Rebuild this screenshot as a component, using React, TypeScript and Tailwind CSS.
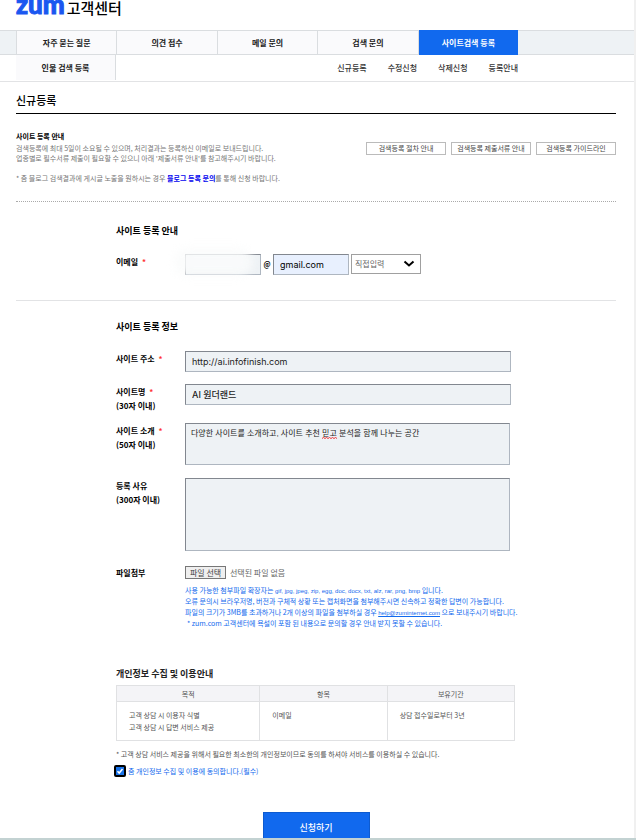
import type { ReactNode } from "react";

const tabs = ["자주 묻는 질문", "의견 접수", "메일 문의", "검색 문의", "사이트검색 등록"];
const subLinks = ["신규등록", "수정신청", "삭제신청", "등록안내"];
const guideButtons = ["검색등록 절차 안내", "검색등록 제출서류 안내", "검색등록 가이드라인"];

const fieldClass =
  "block w-full bg-[#eef2f5] border border-t-[#82878f] border-l-[#82878f] border-r-[#aeb6c0] border-b-[#aeb6c0] outline-none text-[#222]";

interface FieldProps {
  id: string;
  label: string;
  limit?: string;
  required?: boolean;
  className?: string;
  children: ReactNode;
}

const Field = ({ id, label, limit, required, className, children }: FieldProps) => (
  <div className={`flex ${className ?? ""}`}>
    <label htmlFor={id} className="w-[69px] shrink-0 pt-px text-[8px] leading-[14px] font-bold text-black">
      {label}
      {required && <span className="ml-0.5 text-[#f33]"> *</span>}
      {limit && <span className="block">({limit})</span>}
    </label>
    <div className="min-w-0 flex-1">{children}</div>
  </div>
);

const Header = () => (
  <header>
    <div className="flex h-[30px] items-start pl-4">
      <a href="#" className="flex items-baseline gap-0.5">
        <span className="font-['Lato'] text-[26px] leading-[8px] font-black text-[#1a57f0] [-webkit-text-stroke:1px_#1a57f0]">
          zum
        </span>
        <span className="text-[15px] leading-[8px] font-medium text-black">고객센터</span>
      </a>
    </div>
    <nav className="border-y border-[#dadde0] bg-[#eef2f5] pl-4">
      <ul className="flex max-w-[502px]">
        {tabs.map((tab, i) => (
          <li key={tab} className="flex-1 border-l border-[#dadde0]">
            <a
              href="#"
              className={`flex items-center justify-center text-[8px] font-bold ${
                i === tabs.length - 1 ? "-my-px h-[25px] bg-[#1169ee] text-white" : "h-[23px] bg-[#fafafc] text-[#222]"
              }`}
            >
              {tab}
            </a>
          </li>
        ))}
      </ul>
    </nav>
    <nav className="border-b border-[#e2e3e5] pl-4">
      <div className="flex h-[26px] max-w-[502px] items-center justify-between">
        <a
          href="#"
          className="flex h-[25px] w-[100px] items-center justify-center self-start border-r border-[#dadde0] bg-[#fafafc] text-[8px] font-bold text-[#222]"
        >
          인물 검색 등록
        </a>
        <ul className="flex gap-[21px] text-[8px] font-medium text-[#333]">
          {subLinks.map((link) => (
            <li key={link}>
              <a href="#">{link}</a>
            </li>
          ))}
        </ul>
      </div>
    </nav>
  </header>
);

const Intro = () => (
  <section className="flex items-start justify-between border-b border-dotted border-[#aaa] pt-[17px] pb-[18px]">
    <div className="text-[7px] leading-[10px] text-[#777]">
      <h2 className="mb-0.5 font-bold text-black">사이트 등록 안내</h2>
      <p>검색등록에 최대 5일이 소요될 수 있으며, 처리결과는 등록하신 이메일로 보내드립니다.</p>
      <p>업종별로 필수서류 제출이 필요할 수 있으니 아래 '제출서류 안내'를 참고해주시기 바랍니다.</p>
      <p className="mt-2.5">
        * 줌 블로그 검색결과에 게시글 노출을 원하시는 경우{" "}
        <a href="#" className="font-bold text-[#0000ee]">
          블로그 등록 문의
        </a>
        를 통해 신청 바랍니다.
      </p>
    </div>
    <div className="mt-[11px] flex shrink-0 gap-[5px]">
      {guideButtons.map((text) => (
        <button key={text} type="button" className="h-[13px] w-20 border border-[#bbb] bg-white text-[7px] leading-[11px] whitespace-nowrap text-[#444]">
          {text}
        </button>
      ))}
    </div>
  </section>
);

const EmailSection = () => (
  <section className="border-b border-[#e2e3e5] pb-[25px] pl-[100px]">
    <h3 className="pt-[22px] text-[9px] leading-[14px] font-bold text-black">사이트 등록 안내</h3>
    <Field id="email" label="이메일" required className="mt-4">
      <div className="flex items-center text-[9px]">
        <div className="relative w-[76px]">
          <input id="email" type="text" className={`${fieldClass} h-[21px] px-1.5`} />
          <div className="absolute -top-1.5 -left-3 h-7 w-20 rounded-full bg-[#fafbfb]/85 blur-[4px]" />
        </div>
        <span className="w-3 text-center text-[7px] font-bold">@</span>
        <input
          type="text"
          aria-label="이메일 도메인"
          defaultValue="gmail.com"
          className="h-[21px] w-[76px] border border-[#aeb6c0] border-t-[#82878f] border-l-[#82878f] bg-[#e8f0fe] px-1.5 font-['Inter'] text-black outline-none"
        />
        <div className="relative ml-0.5 w-[70px] self-start">
          <select
            aria-label="도메인 선택"
            className="block h-5 w-full appearance-none border border-[#a0a0a0] bg-white pl-[3px] text-[8px] text-[#666] outline-none"
          >
            <option>직접입력</option>
          </select>
          <svg viewBox="0 0 12 8" className="pointer-events-none absolute top-1.5 right-1.5 h-2 w-3" fill="none" stroke="#000" strokeWidth="2">
            <path d="M1.5 1.5 6 5.5l4.5-4" />
          </svg>
        </div>
      </div>
    </Field>
  </section>
);

const SiteSection = () => (
  <section className="max-w-[495px] pl-[100px]">
    <h3 className="pt-[19px] text-[9px] leading-[14px] font-bold text-black">사이트 등록 정보</h3>
    <Field id="url" label="사이트 주소" required className="mt-[17px]">
      <input
        id="url"
        type="text"
        defaultValue="http://ai.infofinish.com"
        className={`${fieldClass} h-[21px] px-1.5 font-['Inter'] text-[9px]`}
      />
    </Field>
    <Field id="name" label="사이트명" limit="30자 이내" required className="mt-3">
      <input
        id="name"
        type="text"
        defaultValue="AI 원더랜드"
        className={`${fieldClass} h-[21px] px-1.5 font-['Inter','Noto_Sans_CJK_KR'] text-[9px] font-medium`}
      />
    </Field>
    <Field id="intro" label="사이트 소개" limit="50자 이내" required className="mt-2.5 pr-px">
      <div className="relative">
        <textarea
          id="intro"
          spellCheck={false}
          defaultValue="다양한 사이트를 소개하고, 사이트 추천 믿고 분석을 함께 나누는 공간"
          className={`${fieldClass} h-[42px] resize-none px-[5px] py-1 font-['Liberation_Sans','Noto_Sans_CJK_KR'] text-[8px] leading-[12px]`}
        />
        {/* spell checker mark */}
        <svg viewBox="0 0 15 2" className="pointer-events-none absolute top-3.5 left-[137px] h-0.5 w-[15px]" fill="none" stroke="#e33">
          <path d="M0 1.5 1.5.5 3 1.5 4.5.5 6 1.5 7.5.5 9 1.5 10.5.5 12 1.5 13.5.5 15 1.5" />
        </svg>
      </div>
    </Field>
    <Field id="reason" label="등록 사유" limit="300자 이내" className="mt-[13px] pr-px">
      <textarea id="reason" className={`${fieldClass} h-[73px] resize-none px-[5px] py-1 text-[8px]`} />
    </Field>
    <Field id="file" label="파일첨부" className="mt-3.5">
      <div className="flex items-center gap-1 pt-px text-[8px] text-[#666]">
        <button id="file" type="button" className="h-[13px] w-[41px] border border-[#777] bg-[#efefef] leading-[11px] text-[#444]">
          파일 선택
        </button>
        <span>선택된 파일 없음</span>
      </div>
      <div className="mt-1.5 text-[7px] leading-[11px] whitespace-nowrap text-[#1169ee]">
        <p>
          사용 가능한 첨부파일 확장자는{" "}
          <span className="font-['Liberation_Sans'] text-[6px] leading-none">
            gif, jpg, jpeg, zip, egg, doc, docx, txt, alz, rar, png, bmp
          </span>{" "}
          입니다.
        </p>
        <p>오류 문의시 브라우저명, 버전과 구체적 상황 또는 캡처화면을 첨부해주시면 신속하고 정확한 답변이 가능합니다.</p>
        <p>
          파일의 크기가 3MB를 초과하거나 2개 이상의 파일을 첨부하실 경우{" "}
          <a href="mailto:help@zuminternet.com" className="font-['Liberation_Sans'] text-[6px] leading-none underline">
            help@zuminternet.com
          </a>{" "}
          으로 보내주시기 바랍니다.
        </p>
        <p className="pl-0.5">* zum.com 고객센터에 욕설이 포함 된 내용으로 문의할 경우 안내 받지 못할 수 있습니다.</p>
      </div>
    </Field>
  </section>
);

const PrivacySection = () => (
  <section className="max-w-[499px] pt-[38px] pl-[100px] text-[7px] text-[#555]">
    <h3 className="text-[9px] leading-[14px] font-bold text-[#222]">개인정보 수집 및 이용안내</h3>
    <table className="mt-1 w-full border-collapse">
      <thead>
        <tr className="h-4 bg-[#f4f4f7] leading-[14px]">
          <th className="w-[36%] border border-[#e0e1e3] font-normal">목적</th>
          <th className="w-[32%] border border-[#e0e1e3] font-normal">항목</th>
          <th className="w-[32%] border border-[#e0e1e3] font-normal">보유기간</th>
        </tr>
      </thead>
      <tbody>
        <tr className="h-[39px] align-top leading-[12px]">
          <td className="border border-[#e0e1e3] px-3 pt-[7px]">
            고객 상담 시 이용자 식별
            <br />
            고객 상담 시 답변 서비스 제공
          </td>
          <td className="border border-[#e0e1e3] px-3 pt-[7px]">이메일</td>
          <td className="border border-[#e0e1e3] px-3 pt-[7px]">상담 접수일로부터 3년</td>
        </tr>
      </tbody>
    </table>
    <p className="mt-[7px] leading-[12px] whitespace-nowrap">
      * 고객 상담 서비스 제공을 위해서 필요한 최소한의 개인정보이므로 동의를 하셔야 서비스를 이용하실 수 있습니다.
    </p>
    <label className="mt-[5px] flex items-center gap-0.5 leading-[10px] text-[#1169ee]">
      <span className="relative -ml-0.5 size-3">
        <input
          type="checkbox"
          defaultChecked
          className="block size-3 appearance-none rounded-[2px] border-2 border-black bg-white checked:bg-[#1a73e8]"
        />
        <svg viewBox="0 0 12 12" className="pointer-events-none absolute inset-0" fill="none" stroke="#fff" strokeWidth="1.5">
          <path d="M3.5 6.2 5.2 8 8.5 4" />
        </svg>
      </span>
      줌 개인정보 수집 및 이용에 동의합니다.(필수)
    </label>
  </section>
);

export default function App() {
  return (
    <div className="border-b-2 border-[#c3d2d2] bg-white font-['Noto_Sans_CJK_KR',sans-serif]">
      <div className="border-r-2 border-[#f0f0f0]">
        <Header />
        <main className="mr-[18px] ml-4">
          <h1 className="border-b border-black pt-2.5 pb-1 text-[11px] leading-[17px] font-medium text-black">신규등록</h1>
          <Intro />
          <form onSubmit={(e) => e.preventDefault()}>
            <EmailSection />
            <SiteSection />
            <PrivacySection />
            <button
              type="submit"
              className="mx-auto mt-[35px] block h-[26px] w-[107px] border border-b-0 border-[#0d5bd0] bg-[#1169ee] pt-1 text-[9px] font-medium text-white"
            >
              신청하기
            </button>
          </form>
        </main>
      </div>
    </div>
  );
}
